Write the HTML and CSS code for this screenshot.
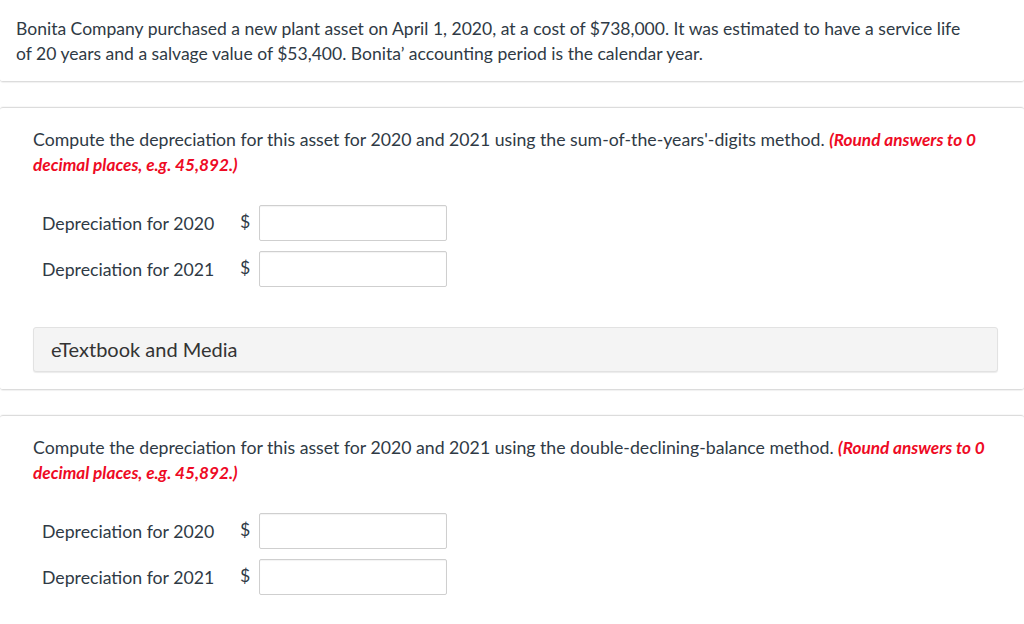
FILE: index.html
```html
<!DOCTYPE html>
<html>
<head>
<meta charset="utf-8">
<link rel="stylesheet" href="styles.css">
</head>
<body>
<div class="intro">
  <p>Bonita Company purchased a new plant asset on April 1, 2020, at a cost of $738,000. It was estimated to have a service life of 20 years and a salvage value of $53,400. Bonita’ accounting period is the calendar year.</p>
</div>

<div class="part">
  <p class="question">Compute the depreciation for this asset for 2020 and 2021 using the sum-of-the-years'-digits method. <em class="hint">(Round answers to 0 decimal places, e.g. 45,892.)</em></p>
  <div class="rows">
    <div class="row"><span class="label">Depreciation for 2020</span><span class="cur">$</span><input class="field" type="text"></div>
    <div class="row"><span class="label">Depreciation for 2021</span><span class="cur">$</span><input class="field" type="text"></div>
  </div>
  <div class="media">eTextbook and Media</div>
</div>

<div class="part last">
  <p class="question">Compute the depreciation for this asset for 2020 and 2021 using the double-declining-balance method. <em class="hint">(Round answers to 0 decimal places, e.g. 45,892.)</em></p>
  <div class="rows">
    <div class="row"><span class="label">Depreciation for 2020</span><span class="cur">$</span><input class="field" type="text"></div>
    <div class="row"><span class="label">Depreciation for 2021</span><span class="cur">$</span><input class="field" type="text"></div>
  </div>
</div>
</body>
</html>
```

FILE: styles.css
```css
html, body {
  margin: 0;
  padding: 0;
  background: #fff;
}
body {
  font-family: Lato, "Open Sans", sans-serif;
  font-size: 17.7px;
  line-height: 25px;
  color: #2f3a45;
  overflow: hidden;
}
p {
  margin: 0;
}
.intro {
  padding: 16px 50px 15px 16px;
  font-size: 17.55px;
  border-bottom: 1px solid #dcdcdc;
  box-shadow: 0 1px 1px rgba(0,0,0,0.06);
  border-radius: 0 0 3px 3px;
}
.part {
  margin-top: 25px;
  border-top: 1px solid #dcdcdc;
  border-bottom: 1px solid #dcdcdc;
  box-shadow: 0 1px 1px rgba(0,0,0,0.06), 0 -1px 1px rgba(0,0,0,0.03);
  border-radius: 3px;
  padding: 19px 26px 17px 33px;
}
.part.last {
  border-bottom: none;
  box-shadow: 0 -1px 1px rgba(0,0,0,0.03);
  padding-bottom: 40px;
}
.hint {
  color: #ee0a24;
  font-size: 17.2px;
  font-weight: bold;
  font-style: italic;
}
.rows {
  margin-top: 28px;
  padding-left: 9px;
  display: flex;
  flex-direction: column;
  gap: 10px;
}
.row {
  display: flex;
  align-items: center;
  height: 36px;
}
.label {
  width: 198px;
  flex: none;
}
.cur {
  width: 19px;
  flex: none;
  margin-top: -3px;
}
.field {
  box-sizing: border-box;
  width: 188px;
  height: 36px;
  border: 1px solid #cfcfcf;
  border-radius: 2px;
  box-shadow: inset 0 1px 1px rgba(0,0,0,0.05);
  margin: 0;
  padding: 0 6px;
  font: inherit;
  background: #fff;
}
.media {
  margin-top: 40px;
  height: 45px;
  box-sizing: border-box;
  background: #f4f4f4;
  border: 1px solid #e2e2e2;
  border-radius: 3px;
  box-shadow: 0 1px 1px rgba(0,0,0,0.08);
  padding-left: 17px;
  display: flex;
  align-items: center;
  font-size: 20px;
  color: #333;
}
```
